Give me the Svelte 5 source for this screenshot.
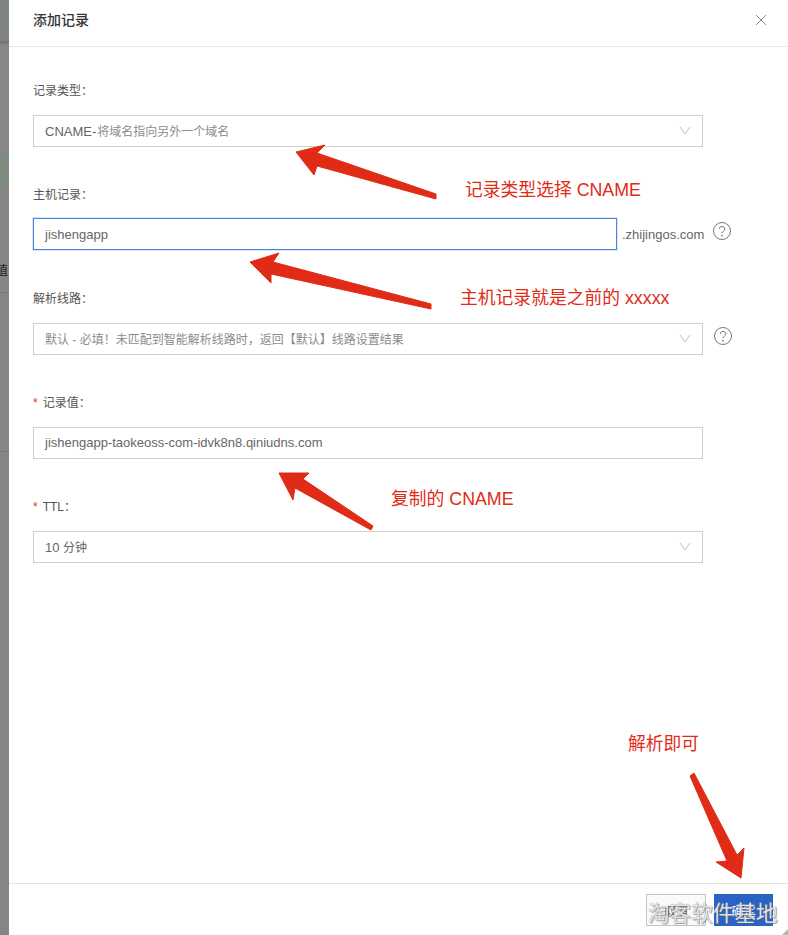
<script>
  const fields = [
    { label: "记录类型", kind: "select", value: "CNAME-", hint: "将域名指向另外一个域名" },
    { label: "主机记录", kind: "input", value: "jishengapp", focused: true, suffix: ".zhijingos.com", help: true },
    { label: "解析线路", kind: "select", hint: "默认 - 必填！未匹配到智能解析线路时，返回【默认】线路设置结果", help: true },
    { label: "记录值", kind: "input", value: "jishengapp-taokeoss-com-idvk8n8.qiniudns.com", required: true },
    { label: "TTL", kind: "select", value: "10 ", unit: "分钟", required: true }
  ];

  const notes = [
    { text: "记录类型选择 CNAME", x: 465, y: 178 },
    { text: "主机记录就是之前的 xxxxx", x: 460, y: 286 },
    { text: "复制的 CNAME", x: 391, y: 487 },
    { text: "解析即可", x: 628, y: 732 }
  ];

  const arrows = [
    "M296 152 L325 145 L317 153 L436 194 L436 199 L317 166 L314 175 Z",
    "M250 262 L279 253 L273 262 L431 304 L431 309 L271 274 L271 283 Z",
    "M279 473 L309 473 L303 479 L373 526 L371 530 L295 488 L293 500 Z",
    "M690 776 L694 773 L737 855 L744 848 L741 878 L716 862 L727 861 Z"
  ];
</script>

<div class="page">
  <div class="backdrop">
    <span class="peek">值</span>
  </div>

  <div class="drawer">
    <header>
      <h2>添加记录</h2>
      <svg class="close" width="12" height="12" viewBox="0 0 12 12">
        <path d="M1 1 L11 11 M11 1 L1 11" />
      </svg>
    </header>

    <div class="form">
      {#each fields as f}
        <div class="field">
          <div class="label">
            {#if f.required}<span class="star">*</span>{/if}{f.label}：
          </div>
          <div class="row" class:lifted={f.focused}>
            <div class="control" class:focused={f.focused} class:short={f.suffix}>
              <span class="text">{#if f.value}<span class="value">{f.value}</span>{/if}{#if f.unit}<span class="unit">{f.unit}</span>{/if}{#if f.hint}<span class="hint">{f.hint}</span>{/if}</span>
              {#if f.kind === "select"}
                <svg class="chev" width="12" height="9" viewBox="0 0 12 9">
                  <path d="M1 1 L6 8 L11 1" />
                </svg>
              {/if}
            </div>
            {#if f.suffix}<span class="suffix">{f.suffix}</span>{/if}
            {#if f.help}
              <svg class="help" width="20" height="20" viewBox="0 0 20 20">
                <circle cx="10" cy="10" r="8.5" />
                <path d="M7.3 8 C7.3 4.6 12.8 4.6 12.8 7.9 C12.8 10 10 10 10 12.2" />
                <circle class="dot" cx="10" cy="14.6" r="0.9" />
              </svg>
            {/if}
          </div>
        </div>
      {/each}
    </div>

    <footer>
      <button class="cancel">取消</button>
      <button class="ok">确定</button>
    </footer>
  </div>

  <svg class="arrows" width="788" height="935" viewBox="0 0 788 935">
    {#each arrows as d}
      <path {d} />
    {/each}
    <path class="grip" d="M788 929 L788 935 L782 935 Z" />
  </svg>

  {#each notes as n}
    <span class="note" style="left: {n.x}px; top: {n.y}px">{n.text}</span>
  {/each}

  <span class="watermark">淘客软件基地</span>
</div>

<style>
  :global(body) {
    margin: 0;
    background: #fff;
  }

  .page {
    position: relative;
    display: flex;
    width: 788px;
    height: 935px;
    overflow: hidden;
    font-family: "Liberation Sans", "Noto Sans CJK SC", sans-serif;
    color: #555;
  }

  .backdrop {
    position: relative;
    flex: 0 0 9px;
    overflow: hidden;
    background: linear-gradient(
      #7f8380 0 41px,
      #777 41px 44px,
      #868786 44px 152px,
      #7f8a80 152px 186px,
      #868686 186px 292px,
      #7a7a7a 292px 293px,
      #858585 293px 451px,
      #777 451px 452px,
      #858585 452px
    );
  }

  .peek {
    position: absolute;
    top: 264px;
    right: 1px;
    font-size: 12px;
    line-height: 14px;
    color: #222;
    white-space: nowrap;
  }

  .drawer {
    flex: 1;
    display: flex;
    flex-direction: column;
    min-width: 0;
  }

  header {
    flex: 0 0 47px;
    box-sizing: border-box;
    display: flex;
    align-items: center;
    justify-content: space-between;
    padding: 0 21px 8px 24px;
    border-bottom: 1px solid #e6e7eb;
  }

  h2 {
    margin: 0;
    font-size: 14px;
    font-weight: 500;
    color: #333;
  }

  .close {
    margin-top: 2px;
  }

  .close path {
    fill: none;
    stroke: #888;
    stroke-width: 1;
  }

  .form {
    flex: 1;
    padding: 35px 0 0 24px;
  }

  .field {
    height: 104px;
  }

  .label {
    height: 33px;
    font-size: 12px;
    line-height: 18px;
    color: #555;
  }

  .star {
    color: #d93026;
    margin-right: 5px;
  }

  .row {
    display: flex;
    align-items: center;
  }

  .row.lifted {
    margin-top: -1px;
  }

  .control {
    flex: 0 0 670px;
    box-sizing: border-box;
    height: 32px;
    display: flex;
    align-items: center;
    justify-content: space-between;
    padding: 0 11px 2px 11px;
    border: 1px solid #d0d0d0;
    font-size: 12px;
    color: #666;
  }

  .control.short {
    flex-basis: 584px;
  }

  .control.focused {
    padding-bottom: 0;
    border-color: #4a86d8;
    box-shadow: 0 0 0 1px #d8e6f8;
  }

  .value {
    font-size: 13px;
  }

  .hint {
    color: #8c8c8c;
  }

  .value + .hint {
    margin-left: 1px;
  }

  .chev path {
    fill: none;
    stroke: #bcbcbc;
    stroke-width: 1;
  }

  .suffix {
    margin: 0 -2px 0 5px;
    font-size: 13px;
    color: #666;
    white-space: nowrap;
  }

  .help {
    margin: 0 0 6px 10px;
  }

  .help circle,
  .help path {
    fill: none;
    stroke: #777;
    stroke-width: 1;
  }

  .help .dot {
    fill: #777;
    stroke: none;
  }

  footer {
    flex: 0 0 52px;
    box-sizing: border-box;
    display: flex;
    justify-content: flex-end;
    gap: 8px;
    padding: 10px 15px 0 0;
    border-top: 1px solid #e3e3e3;
  }

  button {
    width: 60px;
    height: 32px;
    padding: 0;
    font: inherit;
    font-size: 12px;
    border: 1px solid #c4c4c4;
    background: #fafafa;
    color: #555;
  }

  .ok {
    width: 59px;
    background: #2a63c4;
    border-color: #2a63c4;
    color: #fff;
  }

  .arrows {
    position: absolute;
    inset: 0;
    pointer-events: none;
  }

  .arrows path {
    fill: #e02b17;
    stroke: #e02b17;
    stroke-width: 1;
    stroke-linejoin: round;
  }

  .arrows .grip {
    fill: #b5b5b5;
    stroke: none;
  }

  .note {
    position: absolute;
    font-size: 17.8px;
    line-height: 24px;
    color: #e02b17;
    white-space: nowrap;
  }

  .watermark {
    position: absolute;
    left: 648px;
    top: 899px;
    font-size: 21.6px;
    line-height: 30px;
    color: rgba(255, 255, 255, 0.8);
    white-space: nowrap;
    text-shadow: 0 0 1px #777, 1px 1px 0 rgba(90, 90, 90, 0.5);
  }
</style>
